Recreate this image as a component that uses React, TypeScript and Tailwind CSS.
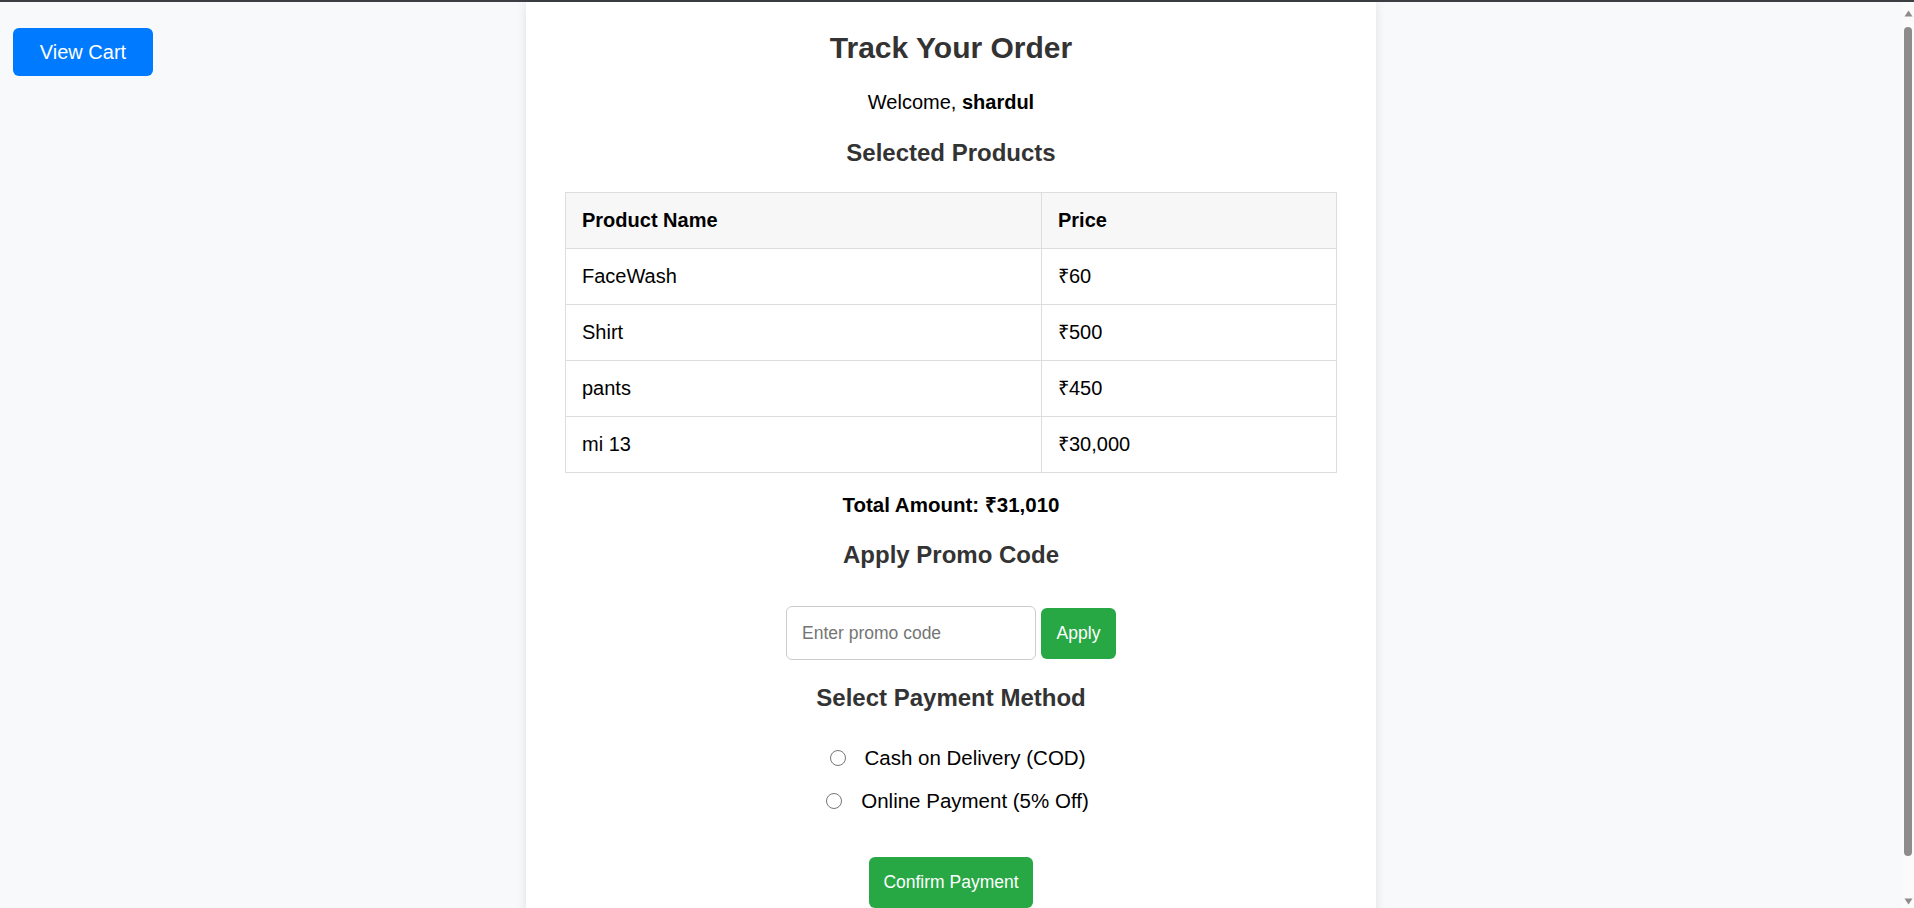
import { useState } from 'react';

const products = [
  { name: 'FaceWash', price: 60 },
  { name: 'Shirt', price: 500 },
  { name: 'pants', price: 450 },
  { name: 'mi 13', price: 30000 },
];

const formatPrice = (n: number) => `₹${n.toLocaleString('en-IN')}`;

// Window scrollbar as it appears in the screenshot
function ScrollbarStrip() {
  return (
    <div className="sticky top-0 flex h-screen flex-col items-center bg-[#fbfbfb] pt-[8px] pb-[5px]">
      <svg width="9" height="7" viewBox="0 0 9 7" className="shrink-0">
        <path d="M4.5 0.5 L8.5 6.5 L0.5 6.5 Z" fill="#8c8c8c" />
      </svg>
      <div className="mt-[10px] mb-[42px] w-[8px] flex-1 rounded-full bg-[#8c8c8c]" />
      <svg width="9" height="7" viewBox="0 0 9 7" className="shrink-0">
        <path d="M0.5 0.5 L8.5 0.5 L4.5 6.5 Z" fill="#8c8c8c" />
      </svg>
    </div>
  );
}

export default function App() {
  const [promo, setPromo] = useState('');
  const [method, setMethod] = useState<string | null>(null);

  const total = products.reduce((sum, p) => sum + p.price, 0);

  const methods = [
    { id: 'cod', label: 'Cash on Delivery (COD)' },
    { id: 'online', label: 'Online Payment (5% Off)' },
  ];

  return (
    <div className="min-h-screen bg-[#f8f9fa] font-['Liberation_Sans',Arial,sans-serif] text-black">
      {/* browser top edge */}
      <div className="h-[2px] bg-[#3b3f43]" />

      <div className="grid grid-cols-[1fr_850px_1fr_12px]">
        {/* Left column - cart button */}
        <div className="pl-[13px] pt-[26px]">
          <button className="h-[48px] w-[140px] rounded-[6px] bg-[#007bff] text-[20px] text-white">
            View Cart
          </button>
        </div>

        {/* Order panel */}
        <div className="flex flex-col items-center bg-white px-[39px] pt-[28px] pb-[42px] shadow-[0_0_10px_rgba(0,0,0,0.1)]">
          <h2 className="text-[30px] leading-[35px] font-bold text-[#333]">Track Your Order</h2>

          <p className="mt-[26px] text-[20px] leading-[23px]">
            Welcome, <strong>shardul</strong>
          </p>

          <h3 className="mt-[25px] text-[24px] leading-[28px] font-bold text-[#333]">Selected Products</h3>

          <table className="mt-[25px] w-full border-collapse text-left text-[20px] leading-[23px]">
            <thead>
              <tr className="bg-[#f7f7f7]">
                <th className="w-[476px] border border-[#dddddd] px-[16px] py-[16px] font-bold">Product Name</th>
                <th className="border border-[#dddddd] px-[16px] py-[16px] font-bold">Price</th>
              </tr>
            </thead>
            <tbody>
              {products.map((p) => (
                <tr key={p.name}>
                  <td className="border border-[#dddddd] px-[16px] py-[16px]">{p.name}</td>
                  <td className="border border-[#dddddd] px-[16px] py-[16px]">{formatPrice(p.price)}</td>
                </tr>
              ))}
            </tbody>
          </table>

          <p className="mt-[20px] text-[20.5px] leading-[23px] font-bold">Total Amount: {formatPrice(total)}</p>

          <h3 className="mt-[25px] text-[24px] leading-[28px] font-bold text-[#333]">Apply Promo Code</h3>

          <div className="mt-[37px] flex items-center gap-[5px]">
            <input
              value={promo}
              onChange={(e) => setPromo(e.target.value)}
              placeholder="Enter promo code"
              className="h-[54px] w-[250px] rounded-[6px] border border-[#cccccc] px-[15px] text-[17.5px] outline-none placeholder:text-[#757575]"
            />
            <button className="h-[51px] w-[75px] rounded-[6px] bg-[#28a745] text-[17.5px] text-white">Apply</button>
          </div>

          <h3 className="mt-[24px] text-[24px] leading-[28px] font-bold text-[#333]">Select Payment Method</h3>

          <div className="mt-[34px] flex flex-col items-center gap-[20px]">
            {methods.map((m) => (
              <label key={m.id} className="flex cursor-pointer items-center pl-[13px] text-[20.5px] leading-[23px]">
                <input
                  type="radio"
                  name="payment"
                  checked={method === m.id}
                  onChange={() => setMethod(m.id)}
                  className="m-0 h-[16px] w-[16px] appearance-none rounded-full border border-[#767676] bg-white checked:border-[4px] checked:border-[#007bff]"
                />
                <span className="ml-[19px]">{m.label}</span>
              </label>
            ))}
          </div>

          <button className="mt-[45px] h-[51px] w-[164px] rounded-[6px] bg-[#28a745] text-[17.5px] text-white">
            Confirm Payment
          </button>
        </div>

        <div />

        <ScrollbarStrip />
      </div>
    </div>
  );
}
